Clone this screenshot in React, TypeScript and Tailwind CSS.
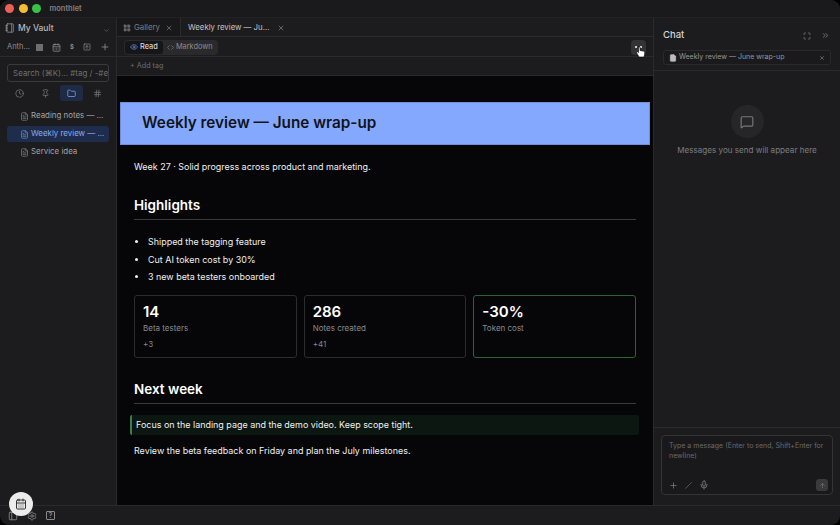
import { ArrowUp, ChevronDown, ChevronsRight, Clock, Code, Eye, File, FileText, Folder, Hash, Maximize, MessageSquare, Mic, PanelLeft, Pin, Plus, Settings, Slash, X, CalendarDays, LayoutGrid, Notebook, SquareArrowUp } from "lucide-react"

const notes = [
  { name: "Reading notes — ...", active: false },
  { name: "Weekly review — ...", active: true },
  { name: "Service idea", active: false },
]

const stats = [
  { value: "14", label: "Beta testers", delta: "+3", border: "border-[#2c2c2e]" },
  { value: "286", label: "Notes created", delta: "+41", border: "border-[#2c2c2e]" },
  { value: "-30%", label: "Token cost", delta: "", border: "border-[#2d6136]" },
]

function Sidebar() {
  return (
    <aside className="flex w-[117px] shrink-0 flex-col border-r border-[#2a2a2c]">
      <div className="flex h-[19px] items-center pl-[5px] pr-[6px] pt-[1px] text-[8.5px] font-medium text-[#b8b8ba]">
        <Notebook className="mr-[3px] size-[10px] text-[#8a8a8a]" />
        <span>My Vault</span>
        <ChevronDown className="ml-auto mt-1 size-[7px] text-[#777]" />
      </div>
      <div className="flex h-[20px] items-center border-b border-[#2a2a2c] pl-[7px] pr-[6px] pt-[1px] text-[7.5px] text-[#8e8e8e]">
        <span>Anth...</span>
        <div className="ml-[6px] flex flex-1 items-center justify-between">
          <span className="size-[7px] bg-[#6e6e70]" />
          <CalendarDays className="size-[9px]" />
          <span className="text-[6px] font-bold leading-none">$</span>
          <SquareArrowUp className="size-[8px]" />
          <Plus className="size-[10px]" />
        </div>
      </div>
      <div className="px-[7px] pt-[7px]">
        <div className="flex h-[18px] items-center overflow-hidden whitespace-nowrap rounded-[3px] border border-[#3a3a3c] px-[5px] text-[8px] text-[#6f6f72]">
          Search (⌘K)... #tag / -#e
        </div>
        <div className="mt-[2px] grid h-[18px] grid-cols-4 items-center -mx-[1px] text-[#77777a]">
          <span className="flex justify-center">
            <Clock className="size-[9px]" />
          </span>
          <span className="flex justify-center">
            <Pin className="size-[9px]" />
          </span>
          <span className="mx-auto flex h-[16px] w-[23px] items-center justify-center rounded-[3px] bg-[#1f2b45] text-[#7fa3f0]">
            <Folder className="size-[9px]" />
          </span>
          <span className="flex justify-center">
            <Hash className="size-[9px]" />
          </span>
        </div>
      </div>
      <ul className="mt-[6px] flex flex-col gap-[2px] px-[7px]">
        {notes.map((note) => (
          <li
            key={note.name}
            className={`flex h-[16px] items-center rounded-[3px] pl-[13px] text-[7.9px] ${note.active ? "bg-[#1f2d4d] text-[#8aa9ee]" : "text-[#a2a2a4]"}`}
          >
            <FileText className="mr-[2px] size-[9px] shrink-0 opacity-70" />
            <span className="whitespace-nowrap">{note.name}</span>
          </li>
        ))}
      </ul>
    </aside>
  )
}

function MainHeader() {
  return (
    <div className="shrink-0 bg-[#1c1c1e]">
      <div className="flex h-[19px] items-stretch border-b border-[#2a2a2c] text-[7.8px]">
        <div className="flex w-[64px] items-center border-r border-[#2a2a2c] bg-[#18181a] pl-[6px] pt-[1px] text-[#7e7e80]">
          <LayoutGrid className="mr-[3px] size-[8px] fill-[#666] text-[#666]" />
          Gallery
          <X className="ml-[5px] size-[8px]" />
        </div>
        <div className="flex w-[109px] items-center pl-[7px] pt-[1px] text-[#c4c4c6]">
          Weekly review — Ju...
          <X className="ml-[8px] size-[8px] text-[#8a8a8a]" />
        </div>
      </div>
      <div className="flex h-[20px] items-center justify-between border-b border-[#2a2a2c] pl-[7px] pr-[7px] pt-[1px]">
        <div className="flex h-[15px] items-center rounded-[4px] bg-[#2a2a2c] p-[1px] text-[7.4px]">
          <span className="flex h-[13px] items-center gap-[2px] rounded-[3px] bg-[#161618] px-[5px] font-medium text-[#d6d6d8]">
            <Eye className="size-[8px] text-[#6f8fdc]" />
            Read
          </span>
          <span className="flex h-[13px] items-center gap-[2px] px-[4px] text-[#8c8c8e]">
            <Code className="size-[7px]" />
            Markdown
          </span>
        </div>
        <div className="flex size-[15px] items-start justify-center gap-[3px] rounded-[4px] bg-[#333335] pt-[6px]">
          <span className="size-[2px] rounded-full bg-white" />
          <span className="size-[2px] rounded-full bg-white" />
        </div>
      </div>
      <div className="flex h-[18px] items-center pl-[13px] text-[7.2px] text-[#6e6e70]">+ Add tag</div>
    </div>
  )
}

function Document() {
  return (
    <div className="min-h-0 flex-1 overflow-hidden border-t border-[#2a2a2c] bg-[#060608] px-[17px] pt-[26px] text-[8.95px] text-[#f0f0f0]">
      <h1 className="-mx-[14px] flex h-[43px] items-center border border-[#6f8fdc] bg-[#85a8ff] pl-[21px] text-[15.3px] font-semibold text-[#11131a]">
        Weekly review — June wrap-up
      </h1>
      <p className="mt-[15px] leading-[13px]">Week 27 · Solid progress across product and marketing.</p>

      <h2 className="mt-[23px] border-b border-[#3a3a3c] pb-[5px] text-[13.5px] font-semibold leading-[18px] text-white">Highlights</h2>
      <ul className="ml-[14px] mt-[15px] flex list-disc flex-col gap-[4.5px] leading-[13px]">
        <li>Shipped the tagging feature</li>
        <li>Cut AI token cost by 30%</li>
        <li>3 new beta testers onboarded</li>
      </ul>

      <div className="mt-[12px] grid grid-cols-3 gap-[7px]">
        {stats.map((s) => (
          <div key={s.label} className={`h-[63px] rounded-[3px] border px-[8px] pt-[7px] ${s.border}`}>
            <div className="text-[15px] font-semibold leading-[18px] text-white">{s.value}</div>
            <div className="mt-[2px] text-[8px] leading-[10px] text-[#8a8a8c]">{s.label}</div>
            <div className="mt-[6px] text-[8px] leading-[10px] text-[#858587]">{s.delta}</div>
          </div>
        ))}
      </div>

      <h2 className="mt-[22px] border-b border-[#3a3a3c] pb-[5px] text-[13.5px] font-semibold leading-[18px] text-white">Next week</h2>
      <div className="-ml-[4px] -mr-[3px] mt-[11px] flex h-[20px] items-center rounded-[2px] border-l-2 border-[#3f7a50] bg-[#0c1712] pl-[4px]">
        Focus on the landing page and the demo video. Keep scope tight.
      </div>
      <p className="mt-[8.5px] leading-[13px]">Review the beta feedback on Friday and plan the July milestones.</p>
    </div>
  )
}

function ChatPanel() {
  return (
    <aside className="flex w-[187px] shrink-0 flex-col border-l border-[#2a2a2c]">
      <div className="flex h-[53px] shrink-0 flex-col border-b border-[#2a2a2c] px-[9px]">
        <div className="flex h-[32px] items-center pt-[3px] text-[#8a8a8c]">
          <span className="text-[9.5px] font-medium text-[#d4d4d6]">Chat</span>
          <Maximize className="ml-auto mr-[1px] size-[8px]" />
          <ChevronsRight className="ml-[9px] mr-[1px] size-[9px]" />
        </div>
        <div className="flex h-[15px] items-center rounded-[3px] border border-[#2a2a2c] bg-[#1a1a1c] px-[5px] text-[7px] text-[#98989a]">
          <File className="mr-[2px] size-[8px] fill-[#bdbdbd] text-[#bdbdbd]" />
          Weekly review — June wrap-up
          <X className="ml-auto size-[6px]" />
        </div>
      </div>
      <div className="flex flex-1 flex-col items-center pt-[34px]">
        <div className="flex size-[33px] items-center justify-center rounded-full bg-[#262628]">
          <MessageSquare className="size-[14px] text-[#777779]" />
        </div>
        <p className="mt-[6px] text-[8.1px] text-[#7c7c7e]">Messages you send will appear here</p>
      </div>
      <div className="shrink-0 border-t border-[#2a2a2c] px-[7px] pb-[10px] pt-[7px]">
        <div className="flex h-[60px] flex-col rounded-[4px] border border-[#343436] bg-[#19191b] pb-[3px] pl-[7px] pr-[4px] pt-[5px]">
          <p className="text-[7px] leading-[9.5px] text-[#69696b]">Type a message (Enter to send, Shift+Enter for newline)</p>
          <div className="mt-auto flex items-center gap-[7px] text-[#7c7c7e]">
            <Plus className="size-[9px]" />
            <Slash className="size-[7px]" />
            <Mic className="size-[10px]" />
            <span className="ml-auto flex size-[12px] items-center justify-center rounded-[3px] bg-[#3a3a3c]">
              <ArrowUp className="size-[7px]" />
            </span>
          </div>
        </div>
      </div>
    </aside>
  )
}

export default function App() {
  return (
    <div className="h-[525px] w-[840px] overflow-hidden bg-black font-['Inter',sans-serif]">
      <div className="relative flex h-full flex-col overflow-hidden rounded-[9px] bg-[#1c1c1e]">
        <header className="flex h-[18px] shrink-0 items-center gap-[4.5px] border-b border-[#222224] bg-[#1a1a1c] pl-[5px]">
          <span className="size-[9px] rounded-full bg-[#ee5f57]" />
          <span className="size-[9px] rounded-full bg-[#f5bd2f]" />
          <span className="size-[9px] rounded-full bg-[#38c24a]" />
          <span className="ml-[4px] text-[7.5px] font-semibold text-[#808082]">monthlet</span>
        </header>
        <div className="flex min-h-0 flex-1">
          <Sidebar />
          <main className="flex min-w-0 flex-1 flex-col">
            <MainHeader />
            <Document />
          </main>
          <ChatPanel />
        </div>
        <footer className="flex h-[20px] shrink-0 items-center gap-[9px] border-t border-[#2a2a2c] pl-[8px] text-[#8a8a8c]">
          <PanelLeft className="size-[10px]" />
          <Settings className="size-[10px]" />
          <span className="flex size-[9px] items-center justify-center rounded-[1px] border border-[#8a8a8c] text-[7px] font-semibold leading-none">?</span>
        </footer>

        {/* floating calendar */}
        <div className="absolute left-[9px] top-[492px] flex size-[24px] items-center justify-center rounded-full bg-[#ececec]">
          <CalendarDays className="size-[12px] text-[#333]" />
        </div>
        {/* mouse pointer */}
        <svg className="absolute left-[636px] top-[46px]" width="9" height="12" viewBox="0 0 9 12">
          <path d="M2.5 1v5.5L1 5.5 .5 6.5 3 11h5l.7-3V5.5L7 5 4 4.5V1z" fill="#fff" stroke="#000" strokeWidth=".6" />
        </svg>
      </div>
    </div>
  )
}
